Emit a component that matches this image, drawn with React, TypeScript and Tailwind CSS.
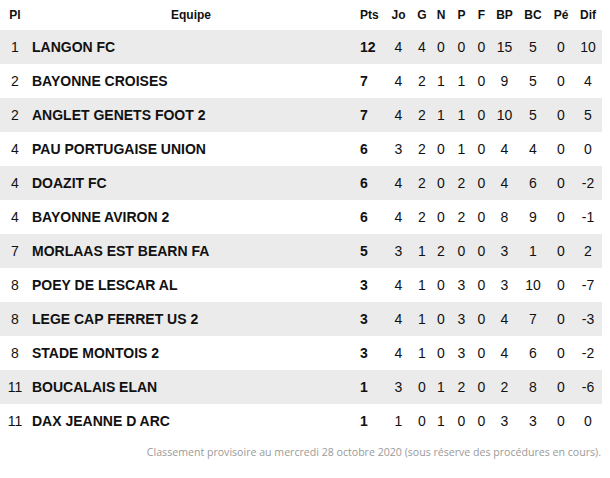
const columns = ["Pts", "Jo", "G", "N", "P", "F", "BP", "BC", "Pé", "Dif"];

const standings = [
  { pl: 1, team: "LANGON FC", stats: [12, 4, 4, 0, 0, 0, 15, 5, 0, 10] },
  { pl: 2, team: "BAYONNE CROISES", stats: [7, 4, 2, 1, 1, 0, 9, 5, 0, 4] },
  { pl: 2, team: "ANGLET GENETS FOOT 2", stats: [7, 4, 2, 1, 1, 0, 10, 5, 0, 5] },
  { pl: 4, team: "PAU PORTUGAISE UNION", stats: [6, 3, 2, 0, 1, 0, 4, 4, 0, 0] },
  { pl: 4, team: "DOAZIT FC", stats: [6, 4, 2, 0, 2, 0, 4, 6, 0, -2] },
  { pl: 4, team: "BAYONNE AVIRON 2", stats: [6, 4, 2, 0, 2, 0, 8, 9, 0, -1] },
  { pl: 7, team: "MORLAAS EST BEARN FA", stats: [5, 3, 1, 2, 0, 0, 3, 1, 0, 2] },
  { pl: 8, team: "POEY DE LESCAR AL", stats: [3, 4, 1, 0, 3, 0, 3, 10, 0, -7] },
  { pl: 8, team: "LEGE CAP FERRET US 2", stats: [3, 4, 1, 0, 3, 0, 4, 7, 0, -3] },
  { pl: 8, team: "STADE MONTOIS 2", stats: [3, 4, 1, 0, 3, 0, 4, 6, 0, -2] },
  { pl: 11, team: "BOUCALAIS ELAN", stats: [1, 3, 0, 1, 2, 0, 2, 8, 0, -6] },
  { pl: 11, team: "DAX JEANNE D ARC", stats: [1, 1, 0, 1, 0, 0, 3, 3, 0, 0] },
];

const grid =
  "grid grid-cols-[30px_322px_32px_29px_18px_20px_21px_19px_27px_30px_26px_28px] items-center";

export default function App() {
  return (
    <div className="w-[602px] bg-white font-['Liberation_Sans',Arial,sans-serif] text-[#111]">
      {/* Header */}
      <div className={`${grid} h-[30px] pb-[1px] text-[12px] font-bold`}>
        <div className="text-center">Pl</div>
        <div className="text-center">Equipe</div>
        {columns.map((col, i) => (
          <div key={col} className={i === 0 ? "pl-2" : "text-center"}>
            {col}
          </div>
        ))}
      </div>

      {/* Rows */}
      {standings.map((row, index) => (
        <div
          key={index}
          className={`${grid} h-[34px] text-[14px] ${index % 2 === 0 ? "bg-[#ebebeb]" : "bg-white"}`}
        >
          <div className="text-center">{row.pl}</div>
          <div className="pl-[2px] font-bold">{row.team}</div>
          {row.stats.map((value, i) => (
            <div key={i} className={i === 0 ? "pl-2 font-bold" : "text-center"}>
              {value}
            </div>
          ))}
        </div>
      ))}

      <p className="mt-[7px] text-right pr-[1px] text-[10.6px] text-[#9a9a9a] font-['Open_Sans',sans-serif]">
        Classement provisoire au mercredi 28 octobre 2020 (sous réserve des procédures en cours).
      </p>
    </div>
  );
}
